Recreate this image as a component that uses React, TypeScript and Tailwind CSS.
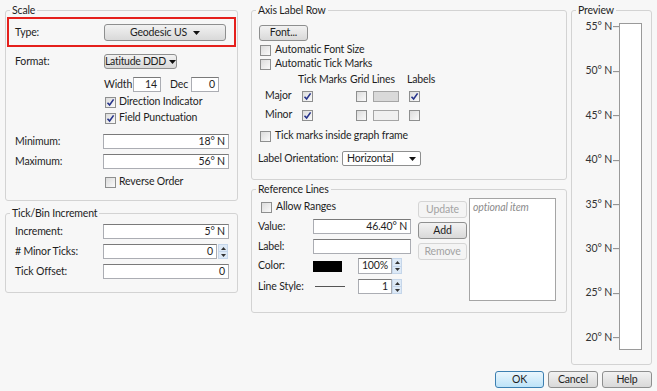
import React from "react";

const Caret = () => (
  <svg width="7" height="4" viewBox="0 0 7 4" className="shrink-0">
    <path d="M0 0 L7 0 L3.5 4 Z" fill="#111" />
  </svg>
);

const Check = ({ on = false }: { on?: boolean }) => (
  <span className="w-[11px] h-[11px] shrink-0 border border-[#8e8f8f] bg-gradient-to-br from-[#dcdcdc] to-[#fafafa] flex items-center justify-center">
    {on && (
      <svg width="9" height="9" viewBox="0 0 9 9">
        <path d="M1.5 4.8 L3.6 7 L7.6 1.4" fill="none" stroke="#27348b" strokeWidth="1.6" />
      </svg>
    )}
  </span>
);

const Btn = ({
  children,
  className = "",
  disabled = false,
}: {
  children: React.ReactNode;
  className?: string;
  disabled?: boolean;
}) => (
  <div
    className={
      "flex items-center justify-center rounded-[3px] border shrink-0 " +
      (disabled
        ? "border-[#d5d5d5] bg-[#f4f4f4] text-[#a3a3a3] "
        : "border-[#8e8f8f] bg-gradient-to-b from-[#f2f2f2] to-[#d9d9d9] text-[#1e1e1e] ") +
      className
    }
  >
    {children}
  </div>
);

const Field = ({ value = "", className = "" }: { value?: string; className?: string }) => (
  <div
    className={
      "h-[15px] border border-[#abadb3] border-t-[#7a7a7a] bg-white flex items-center justify-end pr-[3px] text-[#1e1e1e] shrink-0 " +
      className
    }
  >
    {value}
  </div>
);

const Spin = ({ className = "" }: { className?: string }) => (
  <div className={"w-[10px] flex flex-col shrink-0 " + className}>
    <div className="flex-1 bg-[#dde9f6] border border-[#c5d6ea] flex items-center justify-center">
      <svg width="5" height="3" viewBox="0 0 5 3">
        <path d="M0 3 L5 3 L2.5 0 Z" fill="#333" />
      </svg>
    </div>
    <div className="flex-1 bg-[#dde9f6] border border-[#c5d6ea] border-t-0 flex items-center justify-center">
      <svg width="5" height="3" viewBox="0 0 5 3">
        <path d="M0 0 L5 0 L2.5 3 Z" fill="#333" />
      </svg>
    </div>
  </div>
);

const Group = ({
  title,
  className = "",
  children,
}: {
  title: string;
  className?: string;
  children?: React.ReactNode;
}) => (
  <fieldset className={"border border-[#d3d3d3] rounded-[3px] shrink-0 " + className}>
    <legend className="ml-[4px] px-[2px] leading-[14px] text-[#1e1e1e]">{title}</legend>
    {children}
  </fieldset>
);

const ticks = [55, 50, 45, 40, 35, 30, 25, 20];

export default function App() {
  return (
    <div className="w-[657px] h-[391px] bg-[#f7f7f7] font-['Lato',sans-serif] text-[10.5px] tracking-[-0.15px] whitespace-nowrap text-[#1e1e1e] flex flex-col overflow-hidden">
      <div className="flex items-start pt-[3px] pl-[5px]">
        {/* left column */}
        <div className="w-[233px] flex flex-col">
          <Group title="Scale" className="h-[198px]">
            <div className="mx-[1px] h-[30px] border-2 border-[#e5201c] flex items-start">
              <span className="w-[95px] pl-[6px] pt-[6px] leading-[14px]">Type:</span>
              <Btn className="w-[122px] h-[17px] mt-[5px] gap-[6px]">
                <span>Geodesic US</span>
                <Caret />
              </Btn>
            </div>
            <div className="flex items-center mt-[7px] h-[15px]">
              <span className="w-[98px] pl-[9px]">Format:</span>
              <Btn className="w-[73px] h-[15px] gap-[3px] tracking-[-0.3px]">
                <span>Latitude DDD</span>
                <Caret />
              </Btn>
            </div>
            <div className="flex items-center mt-[8px] h-[15px] pl-[98px]">
              <span className="w-[29px]">Width</span>
              <Field value="14" className="w-[28px]" />
              <span className="w-[21px] ml-[9px]">Dec</span>
              <Field value="0" className="w-[28px]" />
            </div>
            <div className="flex items-center gap-[3px] mt-[2px] h-[16px] pl-[99px]">
              <Check on />
              <span>Direction Indicator</span>
            </div>
            <div className="flex items-center gap-[3px] h-[16px] pl-[99px]">
              <Check on />
              <span>Field Punctuation</span>
            </div>
            <div className="flex items-center mt-[8px] h-[15px]">
              <span className="w-[97px] pl-[9px]">Minimum:</span>
              <Field value="18° N" className="w-[126px]" />
            </div>
            <div className="flex items-center mt-[5px] h-[15px]">
              <span className="w-[97px] pl-[9px]">Maximum:</span>
              <Field value="56° N" className="w-[126px]" />
            </div>
            <div className="flex items-center gap-[3px] mt-[5px] h-[16px] pl-[99px]">
              <Check />
              <span>Reverse Order</span>
            </div>
          </Group>

          <Group title="Tick/Bin Increment" className="h-[87px] mt-[5px]">
            <div className="flex items-center mt-[4px] h-[15px]">
              <span className="w-[97px] pl-[9px]">Increment:</span>
              <Field value="5° N" className="w-[126px]" />
            </div>
            <div className="flex items-center mt-[5px] h-[15px]">
              <span className="w-[97px] pl-[9px]"># Minor Ticks:</span>
              <Field value="0" className="w-[114px]" />
              <Spin className="h-[15px] ml-[1px]" />
            </div>
            <div className="flex items-center mt-[5px] h-[15px]">
              <span className="w-[97px] pl-[9px]">Tick Offset:</span>
              <Field value="0" className="w-[126px]" />
            </div>
          </Group>
        </div>

        {/* middle column */}
        <div className="w-[316px] ml-[13px] flex flex-col">
          <Group title="Axis Label Row" className="h-[177px]">
            <Btn className="w-[49px] h-[16px] mt-[8px] ml-[7px]">Font...</Btn>
            <div className="flex items-center gap-[4px] mt-[2px] h-[14px] pl-[8px]">
              <Check />
              <span>Automatic Font Size</span>
            </div>
            <div className="flex items-center gap-[4px] h-[14px] pl-[8px]">
              <Check />
              <span>Automatic Tick Marks</span>
            </div>
            <div className="flex items-center mt-[2px] h-[14px] pl-[46px]">
              <span className="w-[52px]">Tick Marks</span>
              <span className="w-[57px]">Grid Lines</span>
              <span>Labels</span>
            </div>
            <div className="flex items-center mt-[2px] h-[14px] pl-[13px]">
              <span className="w-[37px]">Major</span>
              <Check on />
              <span className="w-[43px]" />
              <Check />
              <span className="ml-[6px] w-[26px] h-[11px] border border-[#a5a5a5] bg-[#d9d9d9]" />
              <span className="w-[10px]" />
              <Check on />
            </div>
            <div className="flex items-center mt-[5px] h-[14px] pl-[13px]">
              <span className="w-[37px]">Minor</span>
              <Check on />
              <span className="w-[43px]" />
              <Check />
              <span className="ml-[6px] w-[26px] h-[11px] border border-[#a5a5a5] bg-[#f0f0f0]" />
              <span className="w-[10px]" />
              <Check />
            </div>
            <div className="flex items-center gap-[4px] mt-[7px] h-[14px] pl-[8px]">
              <Check />
              <span>Tick marks inside graph frame</span>
            </div>
            <div className="flex items-center mt-[8px] h-[15px] pl-[6px]">
              <span className="w-[84px]">Label Orientation:</span>
              <div className="w-[79px] h-[15px] border border-[#8e8f8f] rounded-[2px] bg-white flex items-center justify-between px-[4px]">
                <span>Horizontal</span>
                <Caret />
              </div>
            </div>
          </Group>

          <Group title="Reference Lines" className="h-[131px] mt-[2px]">
            <div className="flex items-start">
              <div className="w-[159px] flex flex-col">
                <div className="flex items-center gap-[4px] mt-[4px] h-[14px] pl-[9px]">
                  <Check />
                  <span>Allow Ranges</span>
                </div>
                <div className="flex items-center mt-[5px] h-[15px] pl-[6px]">
                  <span className="w-[55px]">Value:</span>
                  <Field value="46.40° N" className="w-[98px]" />
                </div>
                <div className="flex items-center mt-[5px] h-[15px] pl-[6px]">
                  <span className="w-[55px]">Label:</span>
                  <Field className="w-[98px]" />
                </div>
                <div className="flex items-center mt-[4px] h-[16px] pl-[6px]">
                  <span className="w-[55px]">Color:</span>
                  <span className="w-[29px] h-[11px] bg-black" />
                  <Field value="100%" className="w-[34px] !h-[16px] ml-[16px]" />
                  <Spin className="h-[16px]" />
                </div>
                <div className="flex items-center mt-[5px] h-[15px] pl-[6px]">
                  <span className="w-[57px]">Line Style:</span>
                  <span className="w-[30px] h-px bg-[#555]" />
                  <Field value="1" className="w-[34px] ml-[13px]" />
                  <Spin className="h-[15px]" />
                </div>
              </div>
              <div className="ml-[7px] flex flex-col">
                <Btn disabled className="w-[49px] h-[17px] mt-[5px]">Update</Btn>
                <Btn className="w-[49px] h-[17px] mt-[4px]">Add</Btn>
                <Btn disabled className="w-[49px] h-[17px] mt-[4px]">Remove</Btn>
              </div>
              <div className="ml-[2px] mt-[2px] w-[87px] h-[103px] border border-[#a5a5a5] bg-white px-[3px] pt-[2px] italic text-[#8c8c8c] leading-[13px]">
                optional item
              </div>
            </div>
          </Group>
        </div>

        {/* preview */}
        <Group title="Preview" className="w-[81px] h-[362px] ml-[4px]">
          <div className="relative ml-[47px] mt-[6px] w-[23px] h-[327px] border border-[#9a9a9a] bg-white">
            {ticks.map((t, i) => (
              <div
                key={t}
                className="absolute right-[22px] flex items-center -translate-y-1/2 text-[#333]"
                style={{ top: 3 + i * 44.4 }}
              >
                <span>{t}° N</span>
                <span className="w-[6px] h-px bg-[#888] ml-[1px]" />
              </div>
            ))}
          </div>
        </Group>
      </div>

      <div className="flex justify-end gap-[4px] pr-[5px] mt-[6px]">
        <div className="w-[49px] h-[17px] rounded-[3px] border border-[#3c7fb1] bg-gradient-to-b from-[#eaf6fd] to-[#bde3f8] flex items-center justify-center">
          OK
        </div>
        <Btn className="w-[50px] h-[17px]">Cancel</Btn>
        <Btn className="w-[50px] h-[17px]">Help</Btn>
      </div>
    </div>
  );
}
